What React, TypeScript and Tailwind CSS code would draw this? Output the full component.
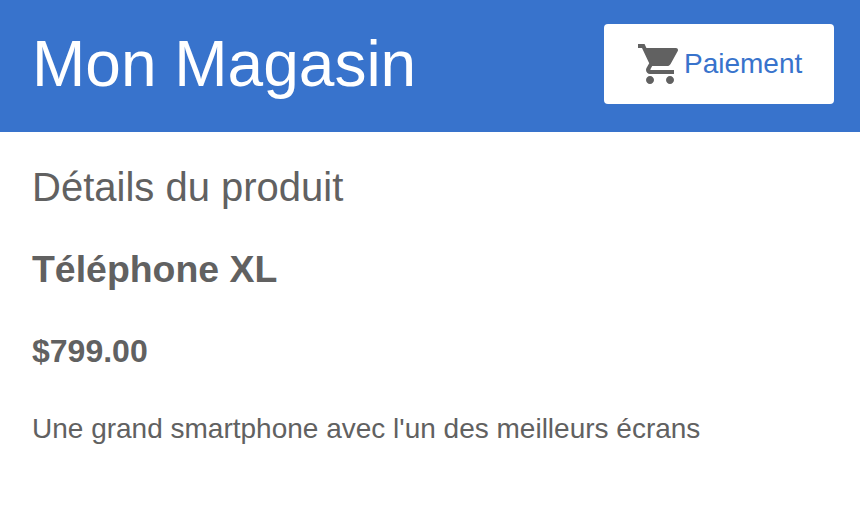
import React from "react";

function CartIcon() {
  return (
    <svg viewBox="0 0 24 24" className="h-12 w-12 shrink-0 fill-[#616161]" aria-hidden="true">
      <path d="M7 18c-1.100 0-1.990.9-1.990 2S5.900 22 7 22s2-.9 2-2-.9-2-2-2zM1 2v2h2l3.600 7.590-1.350 2.450c-.16.28-.25.61-.25.960 0 1.100.9 2 2 2h12v-2H7.420c-.14 0-.25-.11-.25-.25l.03-.12.9-1.630h7.450c.75 0 1.410-.41 1.750-1.030l3.580-6.490c.08-.14.12-.31.12-.48 0-.55-.45-1-1-1H5.210l-.94-2H1zm16 16c-1.100 0-1.990.9-1.990 2s.89 2 1.990 2 2-.9 2-2-.9-2-2-2z" />
    </svg>
  );
}

export default function App() {
  return (
    <div className="min-h-[514px] bg-white font-['Liberation_Sans',Arial,sans-serif] text-[#616161]">
      <header className="flex h-[132px] items-start justify-between bg-[#3873cc] pr-[26px] pl-8 pt-6">
        <h1 className="mt-[3px] text-[64px] leading-[74px] font-normal text-white">Mon Magasin</h1>
        <a className="flex h-20 w-[230px] items-center rounded bg-white pl-8 text-[28px] leading-8 text-[#3873cc]">
          <CartIcon />
          <span>Paiement</span>
        </a>
      </header>
      <main className="px-8 pt-8">
        <h2 className="text-[40px] leading-[46px] font-normal">Détails du produit</h2>
        <h3 className="mt-[37px] text-[37.440px] leading-[44px] font-bold">Téléphone XL</h3>
        <h4 className="mt-[42px] text-[32px] leading-9 font-bold">$799.00</h4>
        <p className="mt-[44px] text-[28px] leading-8">Une grand smartphone avec l'un des meilleurs écrans</p>
      </main>
    </div>
  );
}
